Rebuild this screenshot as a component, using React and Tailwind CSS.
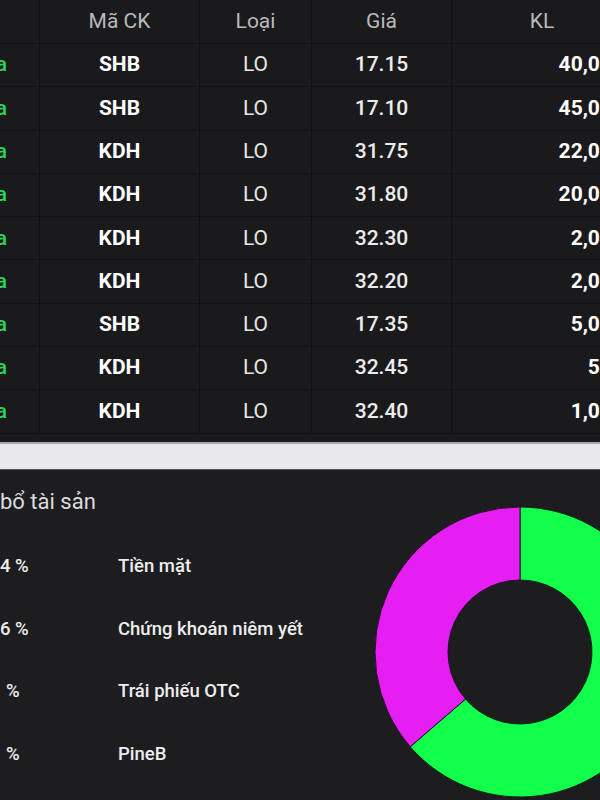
import React from "react";

const rows = [
  ["SHB", "17.15", "40,000"],
  ["SHB", "17.10", "45,000"],
  ["KDH", "31.75", "22,000"],
  ["KDH", "31.80", "20,000"],
  ["KDH", "32.30", "2,000"],
  ["KDH", "32.20", "2,000"],
  ["SHB", "17.35", "5,000"],
  ["KDH", "32.45", "500"],
  ["KDH", "32.40", "1,000"],
];

const alloc = [
  ["4 %", "Tiền mặt"],
  ["6 %", "Chứng khoán niêm yết"],
  ["%", "Trái phiếu OTC"],
  ["%", "PineB"],
];

function Donut() {
  const cx = 145, cy = 145, R = 145, r = 72;
  const a = (130.8 * Math.PI) / 180;
  const ox = cx - R * Math.sin(a), oy = cy - R * Math.cos(a);
  const ix = cx - r * Math.sin(a), iy = cy - r * Math.cos(a);
  const magenta = `M ${cx} ${cy - R} A ${R} ${R} 0 0 0 ${ox} ${oy} L ${ix} ${iy} A ${r} ${r} 0 0 1 ${cx} ${cy - r} Z`;
  const green = `M ${cx} ${cy - R} A ${R} ${R} 0 1 1 ${ox} ${oy} L ${ix} ${iy} A ${r} ${r} 0 1 0 ${cx} ${cy - r} Z`;
  return (
    <svg width="290" height="290" viewBox="0 0 290 290" className="shrink-0">
      <path d={green} fill="#12ff4c" stroke="#0b2a12" strokeWidth="1" />
      <path d={magenta} fill="#e51ef2" stroke="#2a0b2c" strokeWidth="1" />
    </svg>
  );
}

export default function App() {
  return (
    <div
      className="w-[600px] h-[800px] overflow-hidden bg-[#1d1d20] flex flex-col"
      style={{ fontFamily: "Roboto, 'Noto Sans', sans-serif" }}
    >
      <div className="h-[442px] bg-[#1a1a1d] overflow-hidden shrink-0">
        <div className="w-[692px] -ml-[60px]">
          <div className="grid grid-cols-[100px_160px_112px_140px_180px] h-[44px] border-b border-[#111113] text-[21px] text-[#b9b9bc]">
            <div className="border-r border-[#111113]" />
            <div className="flex items-center justify-center border-r border-[#111113]">Mã CK</div>
            <div className="flex items-center justify-center border-r border-[#111113]">Loại</div>
            <div className="flex items-center justify-center border-r border-[#111113]">Giá</div>
            <div className="flex items-center justify-center">KL</div>
          </div>
          {rows.map(([code, price, vol], i) => (
            <div
              key={i}
              className="grid grid-cols-[100px_160px_112px_140px_180px] h-[43.3px] border-b border-[#121214] text-[21px]"
            >
              <div className="flex items-center justify-end pr-[32px] border-r border-[#121214] text-[#2bd35b] font-medium">Mua</div>
              <div className="flex items-center justify-center border-r border-[#121214] text-white font-bold">{code}</div>
              <div className="flex items-center justify-center border-r border-[#121214] text-[#e6e6e6]">LO</div>
              <div className="flex items-center justify-center border-r border-[#121214] text-[#ececec] font-medium">{price}</div>
              <div className="flex items-center justify-end pr-[8px] text-white font-bold">{vol}</div>
            </div>
          ))}
        </div>
      </div>
      <div className="h-[28px] shrink-0 bg-[#e9e9eb] border-t-2 border-[#a9a9ad] border-b border-b-[#5a5a5e]" />
      <div className="flex flex-1">
        <div className="w-[375px] shrink-0">
          <div className="pt-[18px] h-[66px] text-[22px] text-[#dcdcde] leading-[28px]">bổ tài sản</div>
          <div className="flex flex-col">
            {alloc.map(([p, l], i) => (
              <div key={i} className="flex items-center h-[62.5px] text-[18.5px] text-[#ededed] font-medium">
                <div className={i < 2 ? "w-[118px] pl-0" : "w-[118px] pl-[6px]"}>{p}</div>
                <div>{l}</div>
              </div>
            ))}
          </div>
        </div>
        <div className="pt-[37px]">
          <Donut />
        </div>
      </div>
    </div>
  );
}
